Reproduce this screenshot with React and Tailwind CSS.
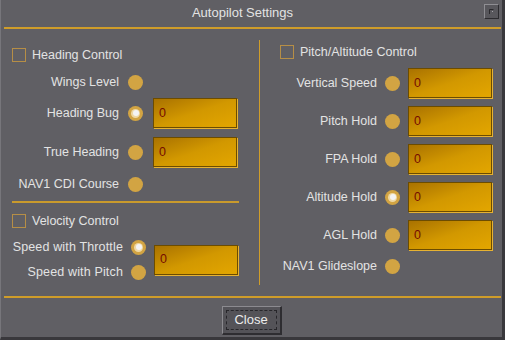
import React from 'react'

const Radio = ({ on }) => (
  <div className="w-[15px] h-[15px] rounded-full bg-[#d2a443] flex items-center justify-center">
    {on && (
      <div className="w-[9px] h-[9px] rounded-full bg-[#efd9a6] flex items-center justify-center">
        <div className="w-[6px] h-[6px] rounded-full bg-[#f4f4f4]" />
      </div>
    )}
  </div>
)

const Box = () => <div className="w-[14px] h-[14px] border border-[#b68e46] shrink-0" />

const Field = ({ value = '0' }) => (
  <div className="w-[84px] h-[30px] border border-[#6c4c00] shadow-[1px_1px_0_#e6b232] bg-gradient-to-br from-[#a97200] via-[#d29800] to-[#e3a600] flex items-center pl-[5px] text-[#760c00]">
    {value}
  </div>
)

const Row = ({ label, on, field, tall, cols }) => (
  <div className={`grid ${cols} items-center ${tall ? 'h-[30px]' : 'h-[16px]'}`}>
    <span className="text-right whitespace-nowrap">{label}</span>
    <Radio on={on} />
    {field ? <Field /> : <span />}
  </div>
)

export default function App() {
  const left = 'grid-cols-[107px_15px_84px] gap-x-[9px] [&>*:last-child]:ml-[1px]'
  const right = 'grid-cols-[1fr_15px_84px] gap-x-[8px]'

  const pitchRows = [
    { label: 'Vertical Speed', on: false },
    { label: 'Pitch Hold', on: false },
    { label: 'FPA Hold', on: false },
    { label: 'Altitude Hold', on: true },
    { label: 'AGL Hold', on: false }
  ]

  return (
    <div className="w-[505px] h-[340px] bg-[#605f64] flex flex-col border-l border-l-[#77767b] border-r-[3px] border-r-[#39383c] border-b-[3px] border-b-[#39383c] font-['Liberation_Sans',sans-serif] text-[12.5px] text-[#e3e3e3]">
      {/* Title bar */}
      <div className="h-[27px] flex">
        <div className="flex-1 flex items-center justify-center text-[13px] pb-[1px]">Autopilot Settings</div>
        <div className="w-[15px] h-[15px] mt-[4px] mr-[3px] border border-t-[#8f8e93] border-l-[#8f8e93] border-r-[#2c2b2f] border-b-[#2c2b2f] bg-[#58575c]">
          <svg width="13" height="13" viewBox="0 0 13 13">
            <path d="M4.5 4.5 H8.5 M4.5 4.5 V9" stroke="#2a292d" strokeWidth="1" fill="none" />
            <rect x="7" y="6" width="1" height="1" fill="#a8a7ac" />
          </svg>
        </div>
      </div>
      <div className="h-[2px] ml-[3px] mr-[1px] bg-[#cf9d2a]" />

      {/* Body */}
      <div className="h-[267px] flex">
        {/* Left column */}
        <div className="w-[258px] pl-[11px] flex flex-col">
          <div className="mt-[19px] flex items-center gap-[6px] h-[14px]">
            <Box />
            <span>Heading Control</span>
          </div>
          <div className="mt-[11px]">
            <Row label="Wings Level" cols={left} />
          </div>
          <div className="mt-[9px]">
            <Row label="Heading Bug" on field tall cols={left} />
          </div>
          <div className="mt-[9px]">
            <Row label="True Heading" field tall cols={left} />
          </div>
          <div className="mt-[8px]">
            <Row label="NAV1 CDI Course" cols={left} />
          </div>
          <div className="mt-[10px] h-[2px] w-[227px] bg-[#c99a2c]" />
          <div className="mt-[11px] flex items-center gap-[6px] h-[14px]">
            <Box />
            <span>Velocity Control</span>
          </div>
          <div className="mt-[11px] flex items-center">
            <div className="grid grid-cols-[111px_15px] gap-x-[8px] gap-y-[9px] items-center">
              <span className="text-right whitespace-nowrap h-[16px] leading-[16px] tracking-[0.15px]">Speed with Throttle</span>
              <Radio on />
              <span className="text-right whitespace-nowrap h-[16px] leading-[16px] tracking-[0.15px]">Speed with Pitch</span>
              <Radio />
            </div>
            <div className="ml-[8px]">
              <Field />
            </div>
          </div>
        </div>

        {/* Divider */}
        <div className="w-px h-[245px] mt-[11px] bg-[#cf9d2a]" />

        {/* Right column */}
        <div className="flex-1 flex flex-col pr-[10px]">
          <div className="mt-[16px] ml-[20px] flex items-center gap-[6px] h-[14px]">
            <Box />
            <span>Pitch/Altitude Control</span>
          </div>
          <div className="mt-[9px] flex flex-col gap-[8px]">
            {pitchRows.map((r) => (
              <Row key={r.label} label={r.label} on={r.on} field tall cols={right} />
            ))}
          </div>
          <div className="mt-[7px]">
            <Row label="NAV1 Glideslope" cols={right} />
          </div>
        </div>
      </div>

      <div className="h-[2px] ml-[3px] mr-[1px] bg-[#cf9d2a]" />

      {/* Footer */}
      <div className="flex-1 flex justify-center pt-[8px]">
        <button className="w-[60px] h-[29px] bg-[#545358] border border-t-[#8c8b90] border-l-[#8c8b90] border-r-[#2e2d31] border-b-[#2e2d31] border-r-2 border-b-2 p-[3px]">
          <div className="w-full h-full border border-dashed border-[#27262a] flex items-center justify-center text-[#ececec] text-[13px]">
            Close
          </div>
        </button>
      </div>
    </div>
  )
}
